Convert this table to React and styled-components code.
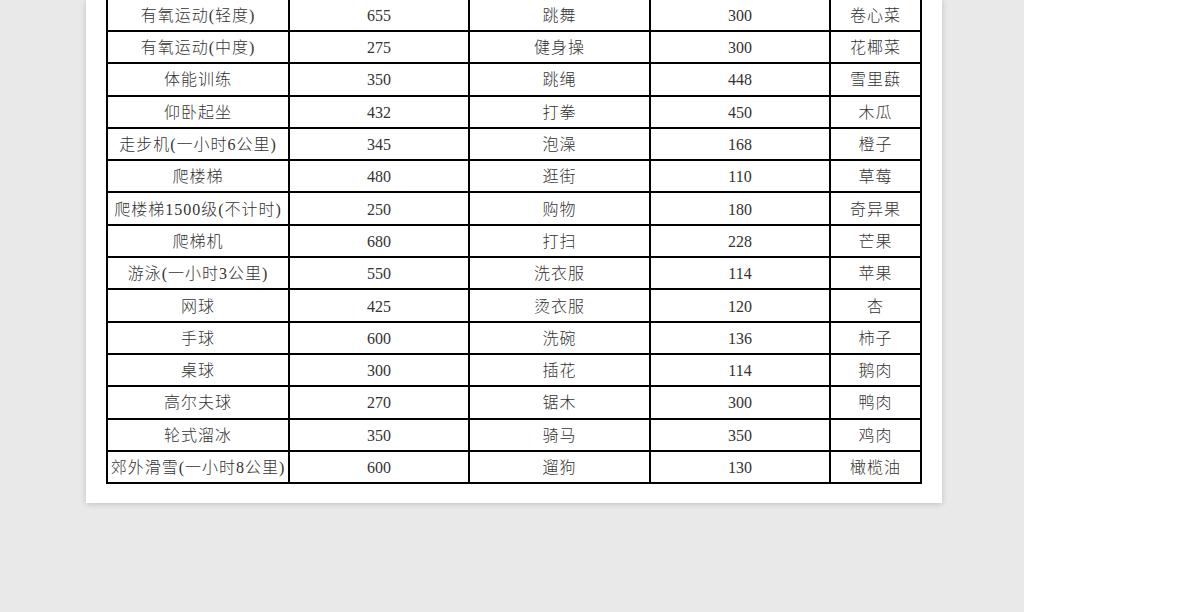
import React from 'react';
import styled, { createGlobalStyle } from 'styled-components';

const GlobalStyle = createGlobalStyle`
  html, body {
    margin: 0;
    padding: 0;
    background: #fff;
  }
`;

const Screen = styled.div`
  display: flex;
  width: 1200px;
  height: 612px;
  overflow: hidden;
`;

const Canvas = styled.div`
  width: 1024px;
  height: 612px;
  background: #e9e9e9;
  padding-left: 86px;
  box-sizing: border-box;
`;

const Sheet = styled.div`
  width: 856px;
  background: #fff;
  box-sizing: border-box;
  padding: 0 21px 19px 20px;
  box-shadow: 0 1px 6px rgba(0, 0, 0, 0.18);
`;

const Table = styled.table`
  border-collapse: collapse;
  table-layout: fixed;
  width: 814px;
  font-family: "Liberation Serif", "Noto Sans CJK SC", serif;
  font-size: 16px;
  color: #333;
`;

const Row = styled.tr`
  height: 32.3px;
  &:first-child {
    height: 31px;
  }
  &:first-child td {
    border-top: none;
  }
`;

const Cell = styled.td`
  border: 2px solid #000;
  padding: 2px 0 0;
  text-align: center;
  vertical-align: middle;
  white-space: nowrap;
  line-height: 20px;
  letter-spacing: ${(p) => (p.$text ? '1px' : '0')};
  font-weight: 300;
`;

const widths = [182, 180, 181, 180, 91];

const rows = [
  ['有氧运动(轻度)', '655', '跳舞', '300', '卷心菜'],
  ['有氧运动(中度)', '275', '健身操', '300', '花椰菜'],
  ['体能训练', '350', '跳绳', '448', '雪里蕻'],
  ['仰卧起坐', '432', '打拳', '450', '木瓜'],
  ['走步机(一小时6公里)', '345', '泡澡', '168', '橙子'],
  ['爬楼梯', '480', '逛街', '110', '草莓'],
  ['爬楼梯1500级(不计时)', '250', '购物', '180', '奇异果'],
  ['爬梯机', '680', '打扫', '228', '芒果'],
  ['游泳(一小时3公里)', '550', '洗衣服', '114', '苹果'],
  ['网球', '425', '烫衣服', '120', '杏'],
  ['手球', '600', '洗碗', '136', '柿子'],
  ['桌球', '300', '插花', '114', '鹅肉'],
  ['高尔夫球', '270', '锯木', '300', '鸭肉'],
  ['轮式溜冰', '350', '骑马', '350', '鸡肉'],
  ['郊外滑雪(一小时8公里)', '600', '遛狗', '130', '橄榄油'],
];

export default function App() {
  return (
    <>
      <GlobalStyle />
      <Screen>
        <Canvas>
          <Sheet>
            <Table>
              <colgroup>
                {widths.map((w, i) => (
                  <col key={i} style={{ width: w }} />
                ))}
              </colgroup>
              <tbody>
                {rows.map((r, i) => (
                  <Row key={i}>
                    {r.map((c, j) => (
                      <Cell key={j} $text={j % 2 === 0}>{c}</Cell>
                    ))}
                  </Row>
                ))}
              </tbody>
            </Table>
          </Sheet>
        </Canvas>
      </Screen>
    </>
  );
}
